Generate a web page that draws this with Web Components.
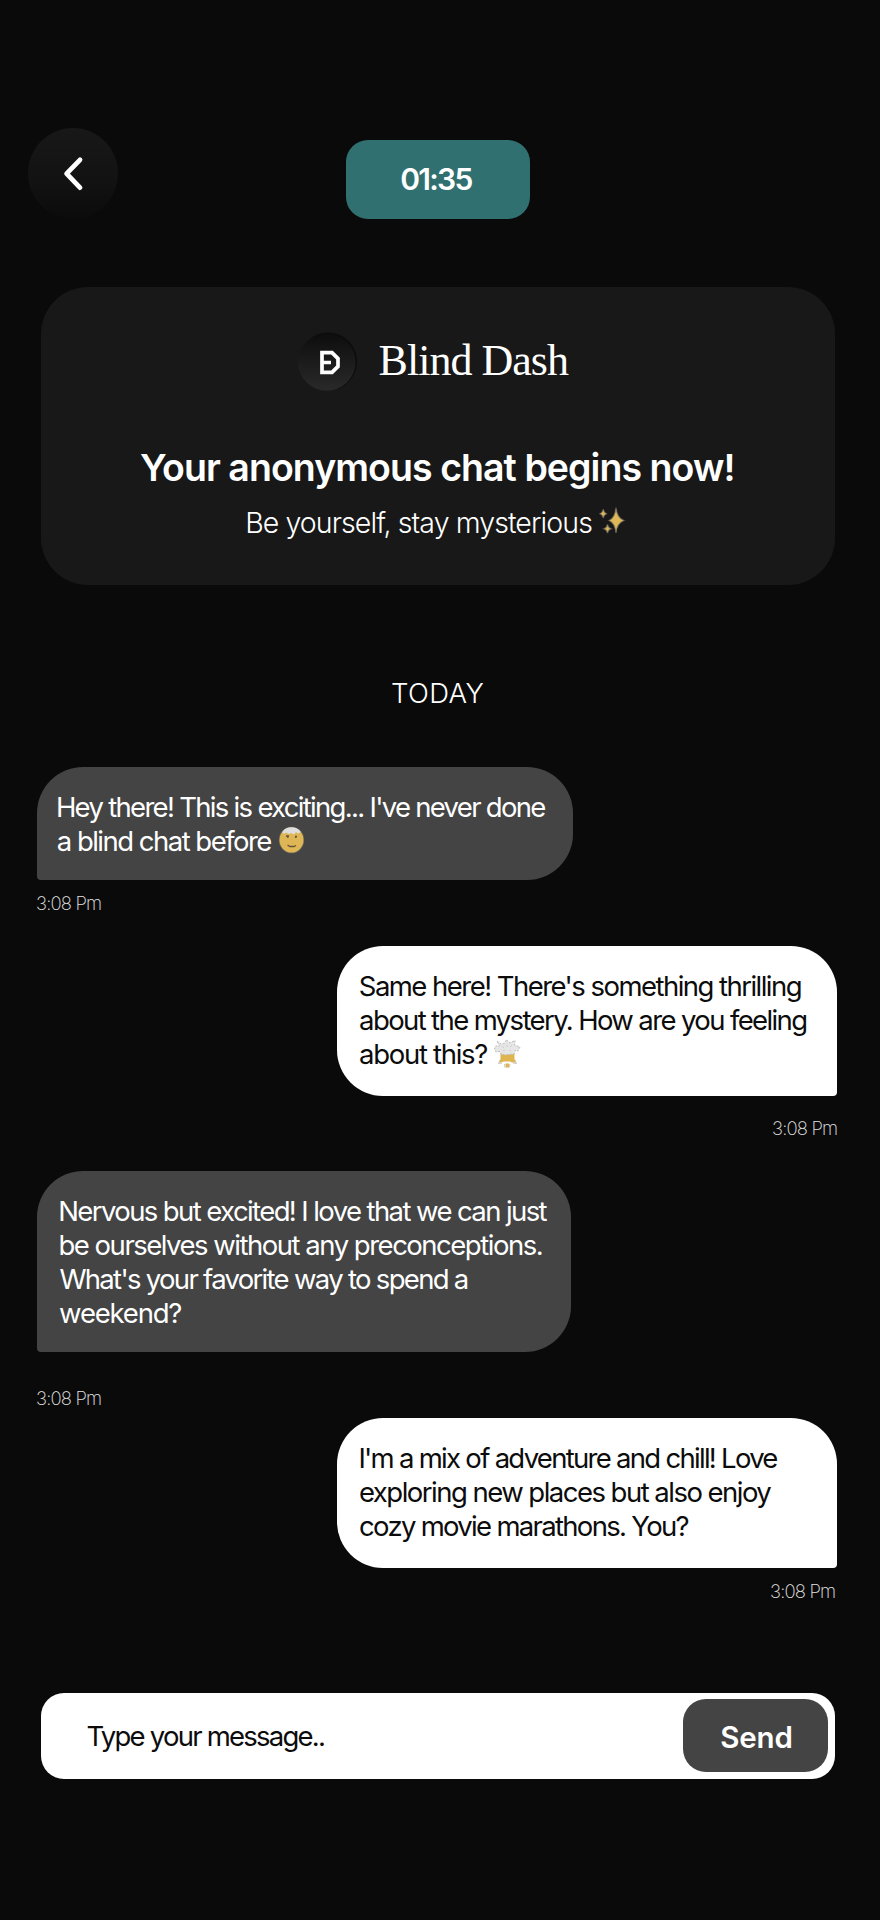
<!DOCTYPE html>
<html lang="en">
<head>
<meta charset="utf-8">
<title>Blind Dash</title>
<style>
html,body{margin:0;background:#0a0a0a}
body{font-family:Inter,"Liberation Sans",sans-serif;color:#fff}
</style>
</head>
<body>
<chat-screen></chat-screen>
<script>
const define = (name, html, init) => {
  const t = document.createElement('template');
  t.innerHTML = html;
  customElements.define(name, class extends HTMLElement {
    connectedCallback() {
      if (this.shadowRoot) return;
      this.attachShadow({mode: 'open'}).append(t.content.cloneNode(true));
      if (init) init(this, this.shadowRoot);
    }
  });
};

/* One line of text whose tracking is adjusted so that its ink spans the "ink" width. */
define('fit-line', `<style>:host{display:block;white-space:pre}span{display:inline-block}</style><span><slot></slot></span>`, (host, root) => {
  const text = host.textContent, cs = getComputedStyle(host), span = root.querySelector('span');
  const ctx = document.createElement('canvas').getContext('2d');
  ctx.font = `${cs.fontWeight} ${cs.fontSize} ${cs.fontFamily}`;
  const size = parseFloat(cs.fontSize);
  const total = ctx.measureText(text).width;
  ctx.font = `${cs.fontWeight} ${size * 10}px ${cs.fontFamily}`;
  const m = ctx.measureText(text);
  const left = m.actualBoundingBoxLeft / 10 * 0.7;
  const right = (m.width - m.actualBoundingBoxRight) / 10;
  const target = +host.getAttribute('ink');
  const gap = (target - (total + left - right)) / (text.length - 1);
  host.style.width = target + 'px';
  span.style.letterSpacing = gap + 'px';
  span.style.marginLeft = left + 'px';
  span.style.marginRight = '-20px';
});

define('back-button', `<style>
:host{display:block;width:90px;height:91px;border-radius:50%;background:linear-gradient(#181818,#121212 60%,#0b0b0b)}
svg{display:block}</style>
<svg width="90" height="91" viewBox="0 0 90 91"><path d="M52 31.8 38.6 45.6 52 59.6" fill="none" stroke="#fff" stroke-width="4.8" stroke-linecap="round" stroke-linejoin="round"/></svg>`);

define('count-down', `<style>
:host{box-sizing:border-box;display:block;width:184px;height:79.5px;border-radius:22px;background:#317070;padding:19px 0 0 55.5px;font-size:30px;font-weight:600;line-height:40px}
</style><slot></slot>`);

define('app-header', `<style>
:host{display:flex;height:91px;padding:128px 0 0 28px;align-items:flex-start}
count-down{margin:11.5px 0 0 227.7px}</style>
<back-button></back-button><count-down><fit-line ink="71">01:35</fit-line></count-down>`);

define('dash-logo', `<style>:host,svg{display:block}</style>
<svg width="60" height="60" viewBox="0 0 60 60"><defs><linearGradient id="g" x2="0" y2="1"><stop stop-color="#0d0d0d"/><stop offset="1" stop-color="#2a2a2a"/></linearGradient></defs>
<circle cx="30" cy="29.5" r="29" fill="#0b0b0b"/><circle cx="28.8" cy="30" r="28.8" fill="url(#g)"/>
<path d="M24 21V20.6H34L40 26.6V34.4L34 40.4H24ZM24 30.5H33" fill="none" stroke="#fff" stroke-width="3.7"/></svg>`);

define('sparkle-emoji', `<style>:host,svg{display:block}</style>
<svg width="28" height="28" viewBox="0 0 28 28"><g fill="#e0b755" stroke="#77736b" stroke-opacity=".65" stroke-width="1.2"><path d="M18 1.5Q19 12 26 14.5Q19 17 18 27Q17 17 11 14.5Q17 12 18 1.5Z"/><path d="M5.2 3Q6 7 9 7.7Q6 8.5 5.2 12Q4.5 8.5 1.5 7.7Q4.5 7 5.2 3Z"/><path d="M9.5 18.5Q10.3 22 13 22.8Q10.3 23.6 9.5 27Q8.7 23.6 6 22.8Q8.7 22 9.5 18.5Z"/></g></svg>`);

define('face-emoji', `<style>:host,svg{display:block}</style>
<svg width="27" height="28" viewBox="0 0 27 28"><ellipse cx="13.5" cy="14" rx="12.7" ry="13.3" fill="#66635e"/><ellipse cx="13.5" cy="14" rx="12" ry="12.6" fill="#dfb656"/>
<path d="M4.2 6.2Q7 1.1 13.5 1.2Q20 1.2 22.8 6L20 7.5 18 6 16 8.5 13 7 11 8 8 6.5 6 8Z" fill="#dedede"/>
<path d="M8 10H11M17 10.5H19M9.8 10V12M17.8 10.5V12M9.5 19 12 20.5H16L18 19.5" fill="none" stroke="#63543a" stroke-width="1.3"/></svg>`);

define('burst-emoji', `<style>:host,svg{display:block}</style>
<svg width="28" height="30" viewBox="0 0 28 30"><path d="M7.5 15H21.5V21L23 24.5H19L17 23.5H11L8 24.5H6L7.5 21ZM12.5 25.5H16V29.5H12.5Z" fill="#dfb550"/>
<path d="M7 22 5.5 25.5 9 25M22 22 23.5 25.5 20 25M11.5 26 12 29.5M17 26 16 29.5" fill="none" stroke="#cbc7be"/>
<path d="M4 3 8 6 12 5 13.5 1.5 16 5 22 2.5 21.5 7 27 9 25 13 22 12.5 21 16 16 16.5 12 17 8 16 7 13.5 3 14 1.5 11 2.5 8 6.5 8Z" fill="#e6e6e6" stroke="#bdbdbd" stroke-dasharray="2 1.4"/>
<path d="M9 8 11 10M14 7V9M17 9 19 7M10 13 12 12M16 12 18 13" stroke="#cfcfcf"/></svg>`);

define('intro-card', `<style>
:host{box-sizing:border-box;display:block;width:793.5px;height:298px;margin:68px 0 0 41px;border-radius:47px;background:#181818;padding-top:45px}
.brand{display:flex;margin-left:257px;height:60px}
.name{font:44px/60px "Liberation Serif",serif;margin:-1.2px 0 0 21px}
.title{font-size:37.5px;font-weight:600;line-height:50px;margin:50.5px 0 0 99.3px}
.sub{display:flex;font-size:28.5px;font-weight:340;line-height:40px;margin:10.4px 0 0 206px}
sparkle-emoji{margin:3px 0 0 6px}
</style>
<div class="brand"><dash-logo></dash-logo><fit-line class="name" ink="190">Blind Dash</fit-line></div>
<fit-line class="title" ink="592.5">Your anonymous chat begins now!</fit-line>
<div class="sub"><fit-line ink="344.5">Be yourself, stay mysterious</fit-line><sparkle-emoji></sparkle-emoji></div>`);

define('chat-bubble', `<style>
:host{box-sizing:border-box;display:block;width:536px;margin-left:36.7px;padding:23.2px 0 22px 20.7px;border-radius:46px 46px 46px 4px;background:#444;color:#fff;font-size:27.5px;line-height:34px}
:host([mine]){width:500px;margin-left:336.7px;padding-left:23px;border-radius:46px 46px 4px 46px;background:#fff;color:#0c0c0c}
</style><slot></slot>`);

define('time-stamp', `<style>
:host{display:block;font-size:18.5px;line-height:22px;font-weight:200;color:#e4e4e4;margin-left:37px}
</style><fit-line ink="63.5">3:08 Pm</fit-line>`);

define('message-list', `<style>
:host{display:block;padding-top:56.5px;font-weight:380}
.row{display:flex;height:34px}
face-emoji{margin:2px 0 0 6.5px}
burst-emoji{margin:1px 0 0 6px;height:30px}
</style>
<chat-bubble style="height:113.5px"><fit-line ink="488">Hey there! This is exciting... I've never done</fit-line><div class="row"><fit-line ink="214">a blind chat before</fit-line><face-emoji></face-emoji></div></chat-bubble>
<time-stamp style="margin-top:12.3px"></time-stamp>
<chat-bubble mine style="height:150px;margin-top:31.4px"><fit-line ink="441">Same here! There's something thrilling</fit-line><fit-line ink="446.5">about the mystery. How are you feeling</fit-line><div class="row"><fit-line ink="127.5">about this?</fit-line><burst-emoji></burst-emoji></div></chat-bubble>
<time-stamp style="margin-top:21.1px;margin-left:773px"></time-stamp>
<chat-bubble style="height:181.5px;width:534px;padding-left:23px;margin-top:31.9px"><fit-line ink="487.5">Nervous but excited! I love that we can just</fit-line><fit-line ink="482">be ourselves without any preconceptions.</fit-line><fit-line ink="407.5">What's your favorite way to spend a</fit-line><fit-line ink="121.5">weekend?</fit-line></chat-bubble>
<time-stamp style="margin-top:35.1px"></time-stamp>
<chat-bubble mine style="height:149.5px;padding-left:23.2px;margin-top:9px"><fit-line ink="417.5">I'm a mix of adventure and chill! Love</fit-line><fit-line ink="411.5">exploring new places but also enjoy</fit-line><fit-line ink="328.5">cozy movie marathons. You?</fit-line></chat-bubble>
<time-stamp style="margin-top:12.5px;margin-left:771px"></time-stamp>`);

define('message-composer', `<style>
:host{box-sizing:border-box;display:flex;justify-content:space-between;width:793.5px;height:86.5px;margin:90.7px 0 0 41px;padding:6.5px 7px 7px 46.5px;border-radius:23px;background:#fff}
.hint{color:#0c0c0c;font-size:27.5px;font-weight:380;line-height:34px;margin-top:19.6px}
.send{box-sizing:border-box;width:145px;height:73px;border-radius:23px;background:#444;padding:18px 0 0 38.5px;font-size:29.5px;font-weight:600;line-height:40px}
</style><fit-line class="hint" ink="236.5">Type your message..</fit-line><div class="send"><fit-line ink="70">Send</fit-line></div>`);

define('day-label', `<style>:host{display:block;font-size:27.5px;font-weight:330;line-height:34px;margin:91px 0 0 392px}</style><fit-line ink="91">TODAY</fit-line>`);

define('chat-screen', `<style>:host{display:flow-root;width:880px;height:1920px;background:#0a0a0a;overflow:hidden}</style>
<app-header></app-header><intro-card></intro-card><day-label></day-label><message-list></message-list><message-composer></message-composer>`);
</script>
</body>
</html>
